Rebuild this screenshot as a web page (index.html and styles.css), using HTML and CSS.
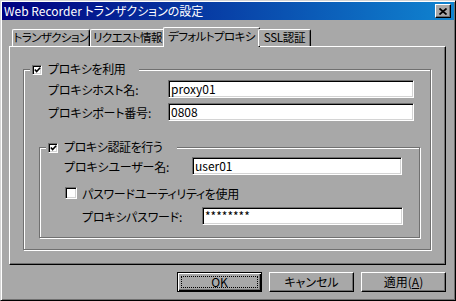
FILE: index.html
```html
<!DOCTYPE html>
<html lang="ja">
<head>
<meta charset="utf-8">
<title>Web Recorder トランザクションの設定</title>
<link rel="stylesheet" href="styles.css">
</head>
<body>
<div class="window">
  <div class="titlebar">
    <span class="title">Web Recorder トランザクションの設定</span>
    <span class="close"><svg width="8" height="7" viewBox="0 0 8 7"><path d="M0.5 0.5L7.5 6.5M7.5 0.5L0.5 6.5" stroke="#000" stroke-width="1.7" fill="none"/></svg></span>
  </div>
  <div class="dialog">
    <div class="tabs">
      <div class="tab t1">トランザクション</div>
      <div class="tab t2">リクエスト情報</div>
      <div class="tab t3 active">デフォルトプロキシ</div>
      <div class="tab t4">SSL認証</div>
    </div>
    <div class="panel">
      <fieldset class="group g1">
        <legend><span class="cb small checked"><svg width="8" height="8" viewBox="0 0 8 8"><path d="M1 3.5L3 5.8L7 1.5" stroke="#000" stroke-width="1.8" fill="none"/></svg></span>プロキシを利用</legend>
        <div class="field f1"><label>プロキシホスト名:</label><div class="input w246">proxy01</div></div>
        <div class="field f2"><label>プロキシポート番号:</label><div class="input w246">0808</div></div>
        <fieldset class="group g2">
          <legend><span class="cb small checked"><svg width="8" height="8" viewBox="0 0 8 8"><path d="M1 3.5L3 5.8L7 1.5" stroke="#000" stroke-width="1.8" fill="none"/></svg></span>プロキシ認証を行う</legend>
          <div class="field f3"><label class="l128">プロキシユーザー名:</label><div class="input w210">user01</div></div>
          <div class="check f4"><span class="cb big"></span>パスワードユーティリティを使用</div>
          <div class="field f5"><label>プロキシパスワード:</label><div class="input w201">********</div></div>
        </fieldset>
      </fieldset>
    </div>
    <div class="buttons">
      <div class="btn default"><span class="focus">OK</span></div>
      <div class="btn">キャンセル</div>
      <div class="btn">適用(<u>A</u>)</div>
    </div>
  </div>
</div>
</body>
</html>
```
FILE: styles.css
```css
html, body {
  margin: 0;
  padding: 0;
  background: #a8a8a8;
}
body {
  font-family: "Noto Sans CJK JP", "Liberation Sans", sans-serif;
  font-size: 12px;
  font-feature-settings: "palt";
  color: #000;
}
.window {
  width: 456px;
  height: 301px;
  box-sizing: border-box;
  background: #a8a8a8;
  border: 1px solid;
  border-color: #d4d4d4 #000 #000 #d4d4d4;
  box-shadow: inset 1px 1px #fff, inset -1px -1px #707070;
  padding: 1px;
  display: flex;
  flex-direction: column;
}
.titlebar {
  height: 18px;
  flex: none;
  display: flex;
  align-items: center;
  background: linear-gradient(to right, #000080, #1084d0);
  color: #fff;
  padding-left: 2px;
  line-height: 16px;
  white-space: nowrap;
}
.close {
  margin-left: auto;
  margin-right: 3px;
  width: 16px;
  height: 14px;
  box-sizing: border-box;
  background: #a8a8a8;
  border: 1px solid;
  border-color: #fff #000 #000 #fff;
  box-shadow: inset -1px -1px #707070;
  display: flex;
  align-items: center;
  justify-content: center;
}
.dialog {
  flex: 1;
  padding: 7px 8px 7px 7px;
  display: flex;
  flex-direction: column;
}
.tabs {
  height: 19px;
  display: flex;
  align-items: flex-end;
  padding-left: 3px;
  position: relative;
  z-index: 1;
}
.tab {
  height: 17px;
  box-sizing: border-box;
  border: 1px solid;
  border-color: #fff #000 transparent #fff;
  border-bottom: 0;
  border-radius: 2px 2px 0 0;
  box-shadow: inset -1px 0 #707070;
  padding: 0;
  font-size: 11.5px;
  letter-spacing: -0.6px;
  line-height: 15px;
  text-align: center;
  white-space: nowrap;
  background: #a8a8a8;
}
.t1 { width: 78px; }
.t2 { width: 75px; }
.t3 { width: 97px; }
.t4 { width: 53px; letter-spacing: -0.3px; }
.tab.active {
  height: 20px;
  margin: 0 -2px -1px;
  padding-top: 1px;
}
.panel {
  height: 219px;
  box-sizing: border-box;
  border: 1px solid;
  border-color: #fff #000 #000 #fff;
  box-shadow: inset -1px -1px #707070;
  padding: 15px 14px 0 13px;
}
.group {
  margin: 0;
  padding: 0;
  min-width: 0;
  border: 1px solid #707070;
  box-shadow: 1px 1px #fff, inset 1px 1px #fff;
}
.group legend {
  margin-left: 6px;
  padding: 0 14px 0 2px;
  height: 14px;
  line-height: 14px;
  background: #a8a8a8;
  white-space: nowrap;
  letter-spacing: -0.4px;
}
.cb {
  display: inline-flex;
  align-items: center;
  justify-content: center;
  box-sizing: border-box;
  background: #fff;
  border: 1px solid;
  border-color: #707070 #fff #fff #707070;
  box-shadow: inset 1px 1px #000, inset -1px -1px #d4d4d4;
  vertical-align: middle;
}
.cb.small {
  width: 10px;
  height: 10px;
  margin: -2px 6px 0 0;
}
.cb.small svg {
  margin: 1px 0 0 1px;
}
.cb.big {
  width: 12px;
  height: 12px;
  margin-right: 5px;
}
.field {
  display: flex;
  align-items: center;
}
.field label {
  width: 120px;
  flex: none;
  letter-spacing: -0.2px;
}
.field label.l128 {
  width: 128px;
}
.input {
  box-sizing: border-box;
  height: 18px;
  background: #fff;
  border: 1px solid;
  border-color: #707070 #fff #fff #707070;
  box-shadow: inset 1px 1px #000, inset -1px -1px #d4d4d4;
  padding: 0 2px;
  line-height: 16px;
  white-space: nowrap;
}
.w246 { width: 246px; }
.w210 { width: 210px; }
.w201 { width: 201px; }
.f1 { margin: 4px 0 0 24px; }
.f2 { margin: 5px 0 0 24px; }
.g2 {
  margin: 19px 10px 11px 15px;
  padding-bottom: 12px;
}
.f3 { margin: 3px 0 0 24px; }
.check {
  display: flex;
  align-items: center;
  height: 12px;
  margin: 12px 0 0 25px;
  white-space: nowrap;
  letter-spacing: -0.3px;
}
.f5 { margin: 8px 0 0 42px; }
.buttons {
  margin-top: 7px;
  display: flex;
  justify-content: flex-end;
  gap: 7px;
}
.btn {
  width: 85px;
  height: 20px;
  box-sizing: border-box;
  border: 1px solid;
  border-color: #fff #000 #000 #fff;
  box-shadow: inset -1px -1px #707070;
  display: flex;
  align-items: center;
  justify-content: center;
  line-height: 16px;
}
.btn u {
  text-decoration-thickness: 1px;
  text-underline-offset: 1px;
}
.btn.default {
  border-color: #000;
  box-shadow: inset 1px 1px #fff, inset -1px -1px #000, inset -2px -2px #707070;
  padding: 3px;
}
.btn.default .focus {
  flex: 1;
  align-self: stretch;
  border: 1px dotted #000;
  display: flex;
  align-items: center;
  justify-content: center;
}
```
